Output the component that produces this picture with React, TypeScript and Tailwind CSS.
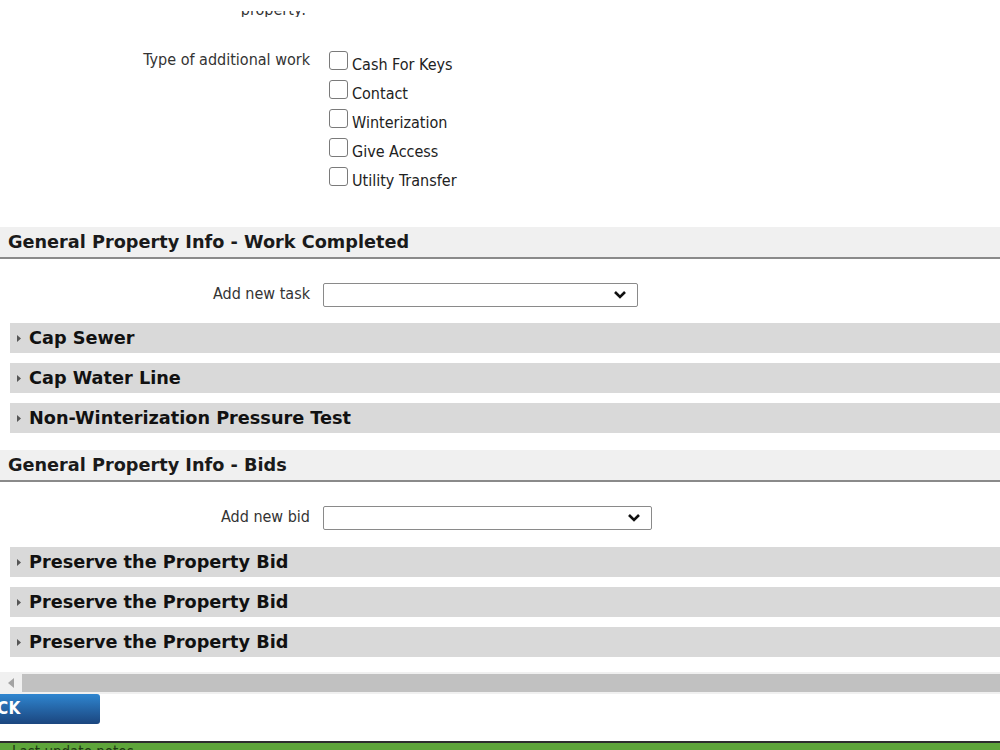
import React from 'react'

const WORK_TYPES = ['Cash For Keys', 'Contact', 'Winterization', 'Give Access', 'Utility Transfer']
const TASKS = ['Cap Sewer', 'Cap Water Line', 'Non-Winterization Pressure Test']
const BIDS = ['Preserve the Property Bid', 'Preserve the Property Bid', 'Preserve the Property Bid']

const font = { fontFamily: '"DejaVu Sans Condensed", "DejaVu Sans", sans-serif' }
const boldFont = { fontFamily: '"DejaVu Sans", sans-serif' }

function Chevron() {
  return (
    <svg width="14" height="10" viewBox="0 0 14 10" className="mr-[4px]">
      <path d="M2 2 L7 7 L12 2" fill="none" stroke="#111" strokeWidth="2.6" />
    </svg>
  )
}

function SectionHeader({ title }: { title: string }) {
  return (
    <div className="h-[32px] bg-[#f0f0f0] border-b-2 border-[#8a8a8a] flex items-center pl-[8px]">
      <span className="text-[17.7px] font-bold text-[#1a1a1a]" style={boldFont}>{title}</span>
    </div>
  )
}

function AccordionRow({ title }: { title: string }) {
  return (
    <div className="h-[30px] bg-[#d9d9d9] ml-[10px] flex items-center">
      <svg width="4" height="7" viewBox="0 0 4 7" className="ml-[7px] mr-[8px]">
        <path d="M0 0 L4 3.5 L0 7 Z" fill="#555" />
      </svg>
      <span className="text-[17.7px] font-bold text-[#111]" style={boldFont}>{title}</span>
    </div>
  )
}

function SelectRow({ label, width }: { label: string; width: number }) {
  return (
    <div className="flex items-center h-[24px]">
      <div className="w-[310px] text-right text-[16px] text-[#333] mt-[-2px]">{label}</div>
      <div
        className="ml-[13px] h-[24px] border border-[#8a8a8a] rounded-[2px] bg-white flex items-center justify-end pr-[6px]"
        style={{ width }}
      >
        <Chevron />
      </div>
    </div>
  )
}

export default function App() {
  return (
    <div className="w-[1000px] h-[750px] overflow-hidden bg-white relative" style={font}>
      {/* label from above, mostly scrolled out of view */}
      <div className="mt-[11px] h-[6px] overflow-hidden">
        <div className="w-[306px] text-right text-[16px] leading-[19px] text-[#333] mt-[-11px]">property:</div>
      </div>

      {/* Type of additional work */}
      <div className="flex mt-[34px]">
        <div className="w-[310px] text-right text-[16px] text-[#333] leading-[18px]">Type of additional work</div>
        <div className="ml-[19px] flex flex-col gap-[10px]">
          {WORK_TYPES.map((w) => (
            <label key={w} className="flex items-end h-[19px]">
              <span className="w-[19px] h-[19px] border border-[#7a7a7a] rounded-[3px] bg-white" />
              <span className="ml-[4px] text-[16px] text-[#222] leading-[16px] mb-[-3px]">{w}</span>
            </label>
          ))}
        </div>
      </div>

      <div className="mt-[41px]">
        <SectionHeader title="General Property Info - Work Completed" />
      </div>

      <div className="mt-[24px]">
        <SelectRow label="Add new task" width={315} />
      </div>

      <div className="mt-[16px] flex flex-col gap-[10px]">
        {TASKS.map((t) => (
          <AccordionRow key={t} title={t} />
        ))}
      </div>

      <div className="mt-[17px]">
        <SectionHeader title="General Property Info - Bids" />
      </div>

      <div className="mt-[24px]">
        <SelectRow label="Add new bid" width={329} />
      </div>

      <div className="mt-[17px] flex flex-col gap-[10px]">
        {BIDS.map((b, i) => (
          <AccordionRow key={i} title={b} />
        ))}
      </div>

      {/* horizontal scrollbar */}
      <div className="mt-[15px] h-[22px] bg-[#f0f0f0] flex items-center">
        <div className="w-[22px] flex justify-center">
          <svg width="6" height="10" viewBox="0 0 6 10">
            <path d="M6 0 L0 5 L6 10 Z" fill="#a3a3a3" />
          </svg>
        </div>
        <div className="flex-1 h-[18px] bg-[#c1c1c1]" />
      </div>

      {/* back button, scrolled partly out of view */}
      <div className="w-[100px] h-[30px] overflow-hidden rounded-r-[3px] bg-gradient-to-b from-[#2f86d0] to-[#1b467f] flex items-center">
        <span className="ml-[-27px] text-white font-bold text-[17px] tracking-[0.3px]">BACK</span>
      </div>

      {/* footer bar */}
      <div className="absolute left-0 right-0 bottom-0 h-[9px] bg-[#5ea53a] border-t-2 border-[#2d2d2d] overflow-hidden">
        <div className="ml-[12px] text-[15px] leading-[15px] mt-[2px] text-[#1f3a14]">Last update notes</div>
      </div>
    </div>
  )
}
